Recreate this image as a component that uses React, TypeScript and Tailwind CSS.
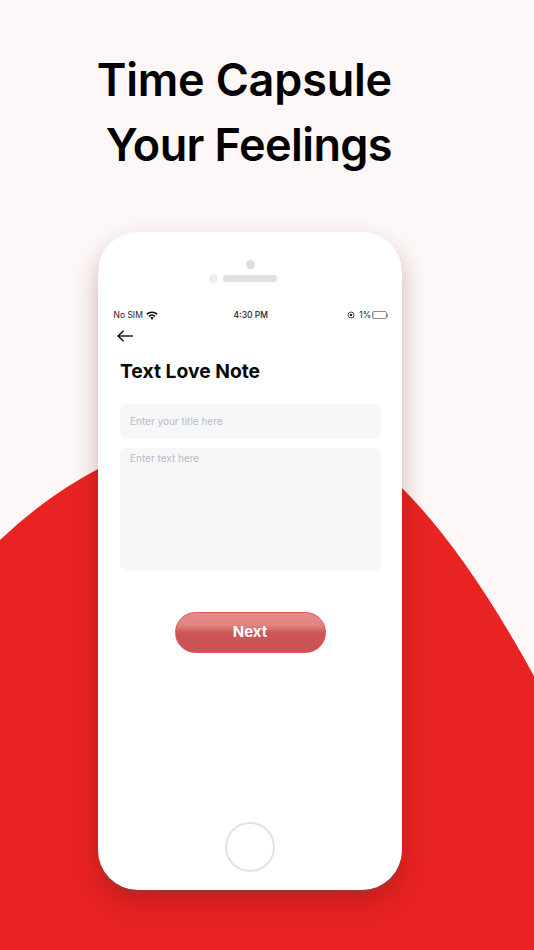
const sans = "font-['Inter','Liberation_Sans',sans-serif]";

function StatusBar() {
  return (
    <div className="flex h-[12px] items-center justify-between pl-[15.5px] pr-[14px] text-[8.5px] leading-none text-[#222]">
      <div className="flex w-[100px] items-center gap-[3px]">
        <span>No SIM</span>
        <svg width="12" height="9" viewBox="0 0 22 16" fill="none" stroke="#111" strokeWidth="3">
          <path d="M1.500 5.500C7 .8 15 .8 20.500 5.500" />
          <path d="M5 9.500c3.500-2.800 8.500-2.800 12 0" />
          <path d="M8.500 13c1.500-1 3.500-1 5 0" />
          <circle cx="11" cy="14.500" r="1.400" fill="#111" stroke="none" />
        </svg>
      </div>
      <span className="font-medium">4:30 PM</span>
      <div className="flex w-[100px] items-center justify-end">
        <svg width="8" height="8" viewBox="0 0 16 16" fill="none" stroke="#222" strokeWidth="1.600" className="mr-[4px]">
          <circle cx="8" cy="8" r="6" />
          <circle cx="8" cy="8" r="2.500" fill="#222" stroke="none" />
        </svg>
        <span className="mr-[1px]">1%</span>
        <div className="h-[8px] w-[15px] rounded-[2px] border border-[#8a8a8a] bg-white">
          <div className="h-full w-[1.500px] bg-[#f0d060]" />
        </div>
        <div className="h-[3px] w-[1px] bg-[#8a8a8a]" />
      </div>
    </div>
  );
}

function Phone() {
  return (
    <div className="relative ml-[98px] flex h-[658px] w-[304px] flex-col rounded-[40px] bg-white shadow-[0_3px_0_rgba(150,60,60,0.55),0_12px_24px_rgba(110,20,20,0.3)]">
      <div className="flex h-[68px] flex-col items-center pt-[28px]">
        <div className="h-[9px] w-[9px] rounded-full bg-[#dedede]" />
        <div className="mt-[5px] flex items-center gap-[5px] pr-[14px]">
          <div className="h-[9px] w-[9px] rounded-full bg-[#eeeeee]" />
          <div className="h-[7px] w-[54px] rounded-full bg-[#e0e0e0]" />
        </div>
      </div>
      <div className="mt-[9px]">
        <StatusBar />
      </div>
      <div className="mt-[5px] flex h-[20px] items-center pl-[19px]">
        <svg width="16" height="12" viewBox="0 0 16 12" fill="none" stroke="#000" strokeWidth="1.300">
          <path d="M1 6H16" />
          <path d="M6.500 .7 1 6l5.500 5.300" />
        </svg>
      </div>
      <div className="pl-[22px] pr-[21px]">
        <h2 className="mt-[13px] text-[19.300px] font-bold leading-[24px] text-[#0a0a0a]">Text Love Note</h2>
        <div className="mt-[21px] flex h-[34px] items-center rounded-[6px] bg-[#f7f7f7] px-[10px] text-[10px] text-[#b6bacb]">
          Enter your title here
        </div>
        <div className="mt-[10px] h-[123px] rounded-[6px] bg-[#f7f7f7] px-[10px] pt-[3px] text-[10px] text-[#b6bacb]">
          Enter text here
        </div>
      </div>
      <div className="mt-[41px] flex justify-center">
        <button className="flex h-[41px] w-[151px] items-center justify-center rounded-full border border-[#e0565c] bg-[linear-gradient(180deg,#e58a88_0%,#e38482_30%,#cc5557_52%,#cb5355_100%)] text-[15px] font-bold text-white">
          Next
        </button>
      </div>
      <div className="mt-auto mb-[18px] flex justify-center">
        <div className="h-[50px] w-[50px] rounded-full border-2 border-[#e2e2e2]" />
      </div>
    </div>
  );
}

export default function App() {
  return (
    <div className={`relative h-[950px] w-[534px] overflow-hidden bg-[#fdf7f7] ${sans}`}>
      <svg className="absolute inset-0" width="534" height="950" viewBox="0 0 534 950">
        <path d="M0 540Q45 497 98 469Q180 425 250 422Q330 425 402 488Q466 552 534 676V950H0Z" fill="#e82321" />
      </svg>
      <div className="relative">
        <h1 className="w-[392px] pt-[47px] text-right text-[45px] font-semibold leading-[65px] tracking-[-0.2px] text-black">
          <span className="block">Time Capsule</span>
          <span className="block tracking-[-0.6px]">Your Feelings</span>
        </h1>
        <div className="mt-[55px]">
          <Phone />
        </div>
      </div>
    </div>
  );
}
